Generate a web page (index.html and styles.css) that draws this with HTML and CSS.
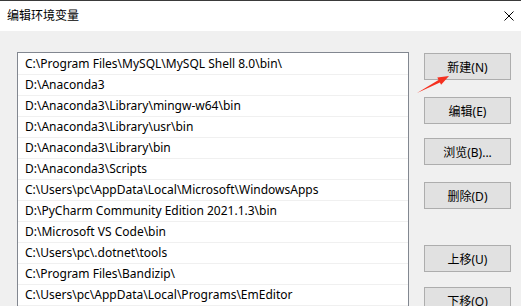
FILE: index.html
```html
<!DOCTYPE html>
<html>
<head>
    <meta charset="utf-8">
    <title>编辑环境变量</title>
    <link rel="stylesheet" href="styles.css">
</head>
<body>
    <div class="titlebar">
        <span class="title">编辑环境变量</span>
        <svg class="close" width="10" height="10" viewBox="0 0 10 10">
            <path d="M0.5 0.5L9.5 9.5M9.5 0.5L0.5 9.5" stroke="#000" stroke-width="1"></path>
        </svg>
    </div>

    <div class="content">
        <ul class="path-list">
            <li>C:\Program Files\MySQL\MySQL Shell 8.0\bin\</li>
            <li>D:\Anaconda3</li>
            <li>D:\Anaconda3\Library\mingw-w64\bin</li>
            <li>D:\Anaconda3\Library\usr\bin</li>
            <li>D:\Anaconda3\Library\bin</li>
            <li>D:\Anaconda3\Scripts</li>
            <li>C:\Users\pc\AppData\Local\Microsoft\WindowsApps</li>
            <li>D:\PyCharm Community Edition 2021.1.3\bin</li>
            <li>D:\Microsoft VS Code\bin</li>
            <li>C:\Users\pc\.dotnet\tools</li>
            <li>C:\Program Files\Bandizip\</li>
            <li>C:\Users\pc\AppData\Local\Programs\EmEditor</li>
            <li>&nbsp;</li>
        </ul>

        <div class="actions">
            <button class="btn">新建(N)</button>
            <button class="btn">编辑(E)</button>
            <button class="btn btn-browse">浏览(B)...</button>
            <button class="btn btn-delete">删除(D)</button>
            <button class="btn btn-up">上移(U)</button>
            <button class="btn btn-down">下移(O)</button>
        </div>

        <svg class="arrow" width="45" height="30" viewBox="0 0 45 30">
            <polygon points="7,25 28.5,11.9 27.3,9.6 39,8 31.1,16.8 29.9,14.5" fill="#f5301f"></polygon>
        </svg>
    </div>
</body>
</html>
```

FILE: styles.css
```css
* {
    margin: 0;
    padding: 0;
    box-sizing: border-box;
}

html, body {
    height: 306px;
    overflow: hidden;
}

body {
    font-family: 'Noto Sans', 'Noto Sans CJK SC', sans-serif;
    font-size: 12px;
    color: #000;
    background: #f0f0f0;
}

.titlebar {
    height: 31px;
    background: #fff;
    border-top: 1px solid #3a3a3a;
    display: flex;
    align-items: center;
    justify-content: space-between;
    padding: 0 7px 0 7px;
}

.title {
    font-size: 12px;
    line-height: 16px;
}

.close {
    margin-right: 0;
}

.content {
    position: relative;
    display: flex;
    align-items: flex-start;
    padding: 21px 0 0 17px;
}

.path-list {
    list-style: none;
    width: 392px;
    background: #fff;
    border: 1px solid #828790;
    border-bottom: none;
    padding-top: 1px;
}

.path-list li {
    height: 21px;
    line-height: 20px;
    padding-left: 7px;
    border-bottom: 1px solid #f0f0f0;
    white-space: nowrap;
    overflow: hidden;
}

.actions {
    display: flex;
    flex-direction: column;
    margin-left: 15px;
    padding-top: 1px;
}

.btn {
    width: 87px;
    height: 27px;
    font-family: inherit;
    font-size: 12px;
    color: #000;
    background: #e1e1e1;
    border: 1px solid #adadad;
    margin-bottom: 17px;
}

.btn-browse {
    margin-top: -3px;
}

.btn-up {
    margin-top: 19px;
}

.btn-down {
    margin-top: -2px;
}

.arrow {
    position: absolute;
    left: 410px;
    top: 37px;
}
```
